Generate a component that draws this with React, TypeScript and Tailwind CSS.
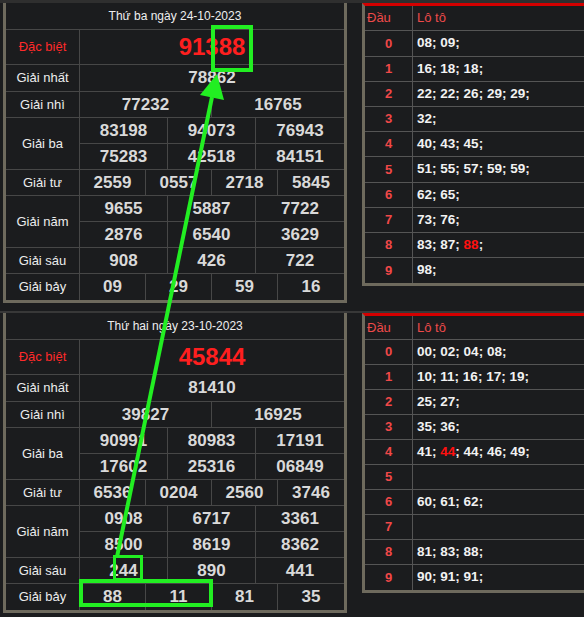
import React from 'react';

type Day = {
  title: string;
  db: string;
  g1: string;
  g2: string[];
  g3: string[];
  g4: string[];
  g5: string[];
  g6: string[];
  g7: string[];
  // "!" in front of a number marks it red
  loto: string[][];
};

const DAYS: Day[] = [
  {
    title: 'Thứ ba ngày 24-10-2023',
    db: '91388',
    g1: '78862',
    g2: ['77232', '16765'],
    g3: ['83198', '94073', '76943', '75283', '42518', '84151'],
    g4: ['2559', '0557', '2718', '5845'],
    g5: ['9655', '5887', '7722', '2876', '6540', '3629'],
    g6: ['908', '426', '722'],
    g7: ['09', '29', '59', '16'],
    loto: [
      ['08', '09'],
      ['16', '18', '18'],
      ['22', '22', '26', '29', '29'],
      ['32'],
      ['40', '43', '45'],
      ['51', '55', '57', '59', '59'],
      ['62', '65'],
      ['73', '76'],
      ['83', '87', '!88'],
      ['98'],
    ],
  },
  {
    title: 'Thứ hai ngày 23-10-2023',
    db: '45844',
    g1: '81410',
    g2: ['39827', '16925'],
    g3: ['90991', '80983', '17191', '17602', '25316', '06849'],
    g4: ['6536', '0204', '2560', '3746'],
    g5: ['0908', '6717', '3361', '8500', '8619', '8362'],
    g6: ['244', '890', '441'],
    g7: ['88', '11', '81', '35'],
    loto: [
      ['00', '02', '04', '08'],
      ['10', '11', '16', '17', '19'],
      ['25', '27'],
      ['35', '36'],
      ['41', '!44', '44', '46', '49'],
      [],
      ['60', '61', '62'],
      [],
      ['81', '83', '88'],
      ['90', '91', '91'],
    ],
  },
];

// the two screenshots were cropped a pixel or two apart
const ROWS_A = ['h-[26px]', 'h-[25px]', 'h-[25px]', 'h-[25px]', 'h-[25px]', 'h-[26px]', 'h-[25px]', 'h-[25px]', 'h-[25px]', 'h-[25px]'];
const ROWS_B = ['h-[25px]', 'h-[25px]', 'h-[25px]', 'h-[25px]', 'h-[25px]', 'h-[25px]', 'h-[25px]', 'h-[25px]', 'h-[25px]', 'h-[25px]'];

const Label: React.FC<{ text: string; red?: boolean; tall?: boolean; end?: boolean }> = ({ text, red, tall, end }) => (
  <div
    className={`flex items-center justify-center border-r border-[#474747] text-[13px] ${tall ? 'row-span-2' : ''} ${end ? '' : 'border-b'} ${red ? 'text-[#ff2a2a]' : 'text-[#ececec]'}`}
  >
    {text}
  </div>
);

const Num: React.FC<{ v: string; span: string; last?: boolean; end?: boolean; big?: boolean }> = ({ v, span, last, end, big }) => (
  <div
    className={`${span} flex items-center justify-center border-[#474747] font-bold ${last ? '' : 'border-r'} ${end ? '' : 'border-b'} ${big ? 'text-[24px] text-[#ff1f1f]' : 'text-[17px] text-[#d9d9d9]'}`}
  >
    {v}
  </div>
);

const Results: React.FC<{ d: Day }> = ({ d }) => (
  <div className="ml-[3px] w-[344px] shrink-0 border-x-[3px] border-b-[3px] border-[#6e6a5d]">
    <div className="flex h-[27px] items-center justify-center border-b border-[#474747] text-[12px] text-[#eeeeee]">
      {d.title}
    </div>
    <div className="grid grid-cols-[74px_repeat(12,minmax(0,1fr))] grid-rows-[35px_27px_26px_26px_26px_26px_26px_26px_26px_26px]">
      <Label text="Đặc biệt" red />
      <Num v={d.db} span="col-span-12" last big />

      <Label text="Giải nhất" />
      <Num v={d.g1} span="col-span-12" last />

      <Label text="Giải nhì" />
      {d.g2.map((v, i) => (
        <Num key={i} v={v} span="col-span-6" last={i === 1} />
      ))}

      <Label text="Giải ba" tall />
      {d.g3.map((v, i) => (
        <Num key={i} v={v} span="col-span-4" last={i % 3 === 2} />
      ))}

      <Label text="Giải tư" />
      {d.g4.map((v, i) => (
        <Num key={i} v={v} span="col-span-3" last={i === 3} />
      ))}

      <Label text="Giải năm" tall />
      {d.g5.map((v, i) => (
        <Num key={i} v={v} span="col-span-4" last={i % 3 === 2} />
      ))}

      <Label text="Giải sáu" />
      {d.g6.map((v, i) => (
        <Num key={i} v={v} span="col-span-4" last={i === 2} />
      ))}

      <Label text="Giải bảy" end />
      {d.g7.map((v, i) => (
        <Num key={i} v={v} span="col-span-3" last={i === 3} end />
      ))}
    </div>
  </div>
);

const Loto: React.FC<{ d: Day; rows: string[]; head: string }> = ({ d, rows, head }) => (
  <div className="ml-[15px] flex-1 border-t-[3px] border-b-[3px] border-l-[3px] border-t-[#d40000] border-b-[#6e6a5d] border-l-[#6e6a5d]">
    <div className={`flex ${head} border-b border-[#555555] text-[13px] text-[#ee4a4a]`}>
      <div className="flex w-[48px] items-center border-r border-[#555555] pl-[2px]">Đầu</div>
      <div className="flex items-center pl-[4px]">Lô tô</div>
    </div>
    {d.loto.map((items, i) => (
      <div key={i} className={`flex ${rows[i]} ${i === 9 ? '' : 'border-b'} border-[#555555]`}>
        <div className="flex w-[48px] items-center justify-center border-r border-[#555555] text-[13px] font-bold text-[#f04848]">
          {i}
        </div>
        <div className="flex items-center whitespace-pre pl-[4px] text-[13.5px] font-bold text-[#f2f2f2]">
          {items.map((n, j) => {
            const red = n.startsWith('!');
            return (
              <React.Fragment key={j}>
                {j > 0 && ' '}
                <span className={red ? 'text-[#ff1010]' : ''}>{red ? n.slice(1) : n}</span>;
              </React.Fragment>
            );
          })}
        </div>
      </div>
    ))}
  </div>
);

const Overlay: React.FC = () => (
  <svg className="pointer-events-none absolute left-0 top-0" width="584" height="617" viewBox="0 0 584 617">
    <g fill="none" stroke="#22ee22">
      <rect x="213" y="27" width="38" height="43" strokeWidth="4" />
      <rect x="114.5" y="556.5" width="27" height="23" strokeWidth="3" />
      <rect x="81" y="581" width="130" height="24" strokeWidth="4" />
      <line x1="117" y1="557" x2="212" y2="97" strokeWidth="4" />
    </g>
    <polygon points="217,74 224,100 200,95" fill="#22ee22" />
  </svg>
);

export default function App() {
  return (
    <div className="relative h-[617px] w-[584px] overflow-hidden bg-[#1b1c1e] font-['Liberation_Sans',Arial,sans-serif]">
      <div className="h-[3px] bg-[#2f2f2f]" />
      <div className="flex h-[308px] items-start">
        <Results d={DAYS[0]} />
        <Loto d={DAYS[0]} rows={ROWS_A} head="h-[25px]" />
      </div>
      <div className="h-[2px] bg-[#383838]" />
      <div className="flex items-start">
        <Results d={DAYS[1]} />
        <Loto d={DAYS[1]} rows={ROWS_B} head="h-[24px]" />
      </div>
      <Overlay />
    </div>
  );
}
